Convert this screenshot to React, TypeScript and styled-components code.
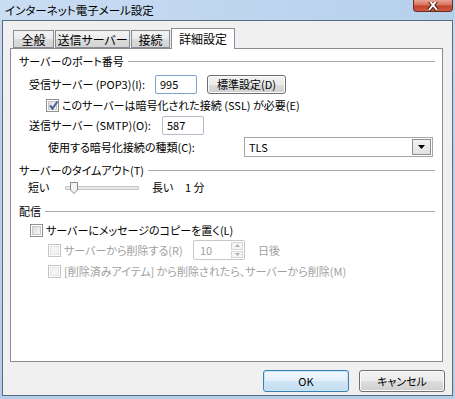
import styled, { createGlobalStyle } from 'styled-components';

const GlobalStyle = createGlobalStyle`
  html, body {
    margin: 0;
    padding: 0;
    background: #c4d8ee;
  }
  body {
    font-family: "Noto Sans CJK JP", "Noto Sans", sans-serif;
    font-size: 11px;
    font-feature-settings: 'palt';
    color: #000;
  }
`;

const Window = styled.div`
  box-sizing: border-box;
  width: 455px;
  height: 399px;
  display: flex;
  flex-direction: column;
  background: linear-gradient(180deg, #c7dbf1 0%, #bad2ec 30%, #b4cde9 100%);
`;

const TitleBar = styled.div`
  height: 20px;
  display: flex;
  align-items: flex-start;
  justify-content: space-between;
  background: linear-gradient(90deg, #c9ddf3 0%, #bfd6ef 50%, #b6d0ec 100%);
`;

const TitleText = styled.div`
  padding: 2px 0 0 5px;
  line-height: 16px;
  font-size: 11.5px;
`;

const CloseButton = styled.div`
  box-sizing: border-box;
  width: 40px;
  height: 12px;
  margin-right: 2px;
  border: 1px solid #6d2a20;
  border-top: none;
  border-radius: 0 0 4px 4px;
  background: linear-gradient(180deg, #e8a493 0%, #d6725c 45%, #c2432b 55%, #cf5b40 100%);
  display: flex;
  justify-content: center;
  align-items: flex-end;
  overflow: hidden;
`;

const Client = styled.div`
  flex: 1;
  margin: 0 2px 3px 2px;
  border: 1px solid #5b6b7c;
  background: #f0f0f0;
  display: flex;
  flex-direction: column;
`;

const TabArea = styled.div`
  margin: 7px 9px 0 7px;
  display: flex;
  flex-direction: column;
`;

const TabStrip = styled.div`
  height: 20px;
  display: flex;
  align-items: flex-end;
  padding-left: 3px;
  position: relative;
  z-index: 1;
`;

const Tab = styled.div<{ $w: number; $active?: boolean }>`
  box-sizing: border-box;
  width: ${(p) => p.$w}px;
  height: ${(p) => (p.$active ? 21 : 18)}px;
  margin-bottom: ${(p) => (p.$active ? -1 : 0)}px;
  margin-right: 1px;
  border: 1px solid #898c95;
  border-bottom: ${(p) => (p.$active ? 'none' : '1px solid #898c95')};
  background: ${(p) =>
    p.$active ? '#fff' : 'linear-gradient(180deg, #f3f3f3 0%, #ebebeb 50%, #dcdcdc 51%, #d4d4d4 100%)'};
  display: flex;
  align-items: center;
  justify-content: center;
  line-height: 16px;
  font-size: 12px;
  padding-top: ${(p) => (p.$active ? 0 : 1)}px;
`;

const Panel = styled.div`
  box-sizing: border-box;
  height: 314px;
  border: 1px solid #898c95;
  background: #fff;
  padding: 4px 7px 0 8px;
  display: flex;
  flex-direction: column;
`;

const GroupHeader = styled.div<{ $mt: number }>`
  height: 16px;
  margin-top: ${(p) => p.$mt}px;
  display: flex;
  align-items: center;
  gap: 4px;
  line-height: 16px;

  &::after {
    content: '';
    flex: 1;
    height: 1px;
    background: #a8a8a8;
    margin-top: 1px;
  }
`;

const Row = styled.div<{ $mt: number; $indent: number; $h?: number }>`
  height: ${(p) => p.$h ?? 20}px;
  margin-top: ${(p) => p.$mt}px;
  padding-left: ${(p) => p.$indent}px;
  display: flex;
  align-items: center;
  line-height: 16px;
  white-space: nowrap;
`;

const Label = styled.span<{ $w?: number; $disabled?: boolean }>`
  display: inline-block;
  flex: none;
  width: ${(p) => (p.$w ? `${p.$w}px` : 'auto')};
  color: ${(p) => (p.$disabled ? '#a0a0a0' : '#000')};
`;

const TextBox = styled.div<{ $w: number; $focus?: boolean }>`
  box-sizing: border-box;
  width: ${(p) => p.$w}px;
  height: 19px;
  border: 1px solid ${(p) => (p.$focus ? '#7da2ce' : '#b5bcc7')};
  border-radius: 2px;
  padding: 0 0 0 4px;
  display: flex;
  align-items: center;
  background: #fff;
`;

const PushButton = styled.div<{ $w: number; $h?: number; $default?: boolean; $ml?: number }>`
  box-sizing: border-box;
  width: ${(p) => p.$w}px;
  height: ${(p) => p.$h ?? 19}px;
  margin-left: ${(p) => p.$ml ?? 0}px;
  border: 1px solid ${(p) => (p.$default ? '#3c7fb1' : '#707070')};
  border-radius: 3px;
  background: ${(p) =>
    p.$default
      ? 'linear-gradient(180deg, #f2f8fc 0%, #e3f0f9 50%, #cfe5f4 51%, #c4dff2 100%)'
      : 'linear-gradient(180deg, #f2f2f2 0%, #ebebeb 50%, #dddddd 51%, #cfcfcf 100%)'};
  box-shadow: inset 0 0 0 1px ${(p) => (p.$default ? '#c5e4f8' : '#fbfbfb')};
  display: flex;
  align-items: center;
  justify-content: center;
  line-height: 16px;
`;

const Box = styled.div<{ $disabled?: boolean }>`
  box-sizing: border-box;
  width: 13px;
  height: 13px;
  border: 1px solid ${(p) => (p.$disabled ? '#c4c4c4' : '#8e8f8f')};
  background: #fff;
  padding: 1px;
  margin-right: 3px;
  flex: none;
`;

const BoxInner = styled.div<{ $disabled?: boolean }>`
  width: 9px;
  height: 9px;
  box-sizing: border-box;
  border: 1px solid ${(p) => (p.$disabled ? '#e4e4e4' : '#c8c8c8')};
  background: ${(p) =>
    p.$disabled ? '#f4f4f4' : 'linear-gradient(135deg, #d9d9d9 0%, #ededed 60%, #f8f8f8 100%)'};
  position: relative;
`;

const Check = styled.svg`
  position: absolute;
  left: -1px;
  top: -2px;
`;

const Combo = styled.div`
  box-sizing: border-box;
  width: 189px;
  height: 20px;
  margin-left: auto;
  margin-right: 2px;
  border: 1px solid #a5a5a5;
  background: #fff;
  display: flex;
  align-items: center;
  padding-left: 4px;
  padding-right: 1px;
`;

const ComboValue = styled.span`
  flex: 1;
`;

const DropButton = styled.div`
  box-sizing: border-box;
  width: 19px;
  height: 16px;
  border: 1px solid #8f8f8f;
  background: linear-gradient(180deg, #f4f4f4 0%, #e2e2e2 100%);
  display: flex;
  align-items: center;
  justify-content: center;
`;

const SliderTrack = styled.div`
  position: relative;
  width: 72px;
  height: 2px;
  margin: 1px 13px 0 13px;
  border: 1px solid #c4c4c4;
  border-radius: 1px;
  background: #e7eaea;
`;

const Thumb = styled.svg`
  position: absolute;
  left: 4px;
  top: -5px;
`;

const Spin = styled.div`
  box-sizing: border-box;
  width: 52px;
  height: 20px;
  border: 1px solid #c4c8ce;
  border-radius: 2px;
  background: #fff;
  display: flex;
  align-items: stretch;
  color: #a0a0a0;
`;

const SpinValue = styled.span`
  flex: 1;
  padding-left: 6px;
  display: flex;
  align-items: center;
`;

const SpinButtons = styled.div`
  width: 14px;
  display: flex;
  flex-direction: column;
  gap: 1px;
  padding: 1px;
  box-sizing: border-box;
`;

const SpinBtn = styled.div`
  flex: 1;
  border: 1px solid #d6d6d6;
  background: #f4f4f4;
  display: flex;
  align-items: center;
  justify-content: center;
`;

const Footer = styled.div`
  margin-top: 8px;
  padding-right: 7px;
  display: flex;
  justify-content: flex-end;
  gap: 10px;
`;

const CheckBox = ({ checked, disabled }: { checked?: boolean; disabled?: boolean }) => (
  <Box $disabled={disabled}>
    <BoxInner $disabled={disabled}>
      {checked && (
        <Check width="11" height="11" viewBox="0 0 11 11">
          <path d="M2 5.5 L4.5 8.5 L9.5 1.5" fill="none" stroke="#4a5f97" strokeWidth="2" />
        </Check>
      )}
    </BoxInner>
  </Box>
);

export default function App() {
  return (
    <>
      <GlobalStyle />
      <Window>
        <TitleBar>
          <TitleText>インターネット電子メール設定</TitleText>
          <CloseButton>
            <svg width="14" height="9" viewBox="0 0 14 9">
              <path d="M3 -2 L11 8 M11 -2 L3 8" stroke="#4a2218" strokeWidth="4" />
              <path d="M3 -2 L11 8 M11 -2 L3 8" stroke="#fff" strokeWidth="2" />
            </svg>
          </CloseButton>
        </TitleBar>
        <Client>
          <TabArea>
            <TabStrip>
              <Tab $w={41}>全般</Tab>
              <Tab $w={75}>送信サーバー</Tab>
              <Tab $w={39}>接続</Tab>
              <Tab $w={64} $active>
                詳細設定
              </Tab>
            </TabStrip>
            <Panel>
              <GroupHeader $mt={0}>サーバーのポート番号</GroupHeader>
              <Row $mt={5} $indent={10}>
                <Label $w={126}>受信サーバー (POP3)(I):</Label>
                <TextBox $w={42} $focus>
                  995
                </TextBox>
                <PushButton $w={79} $ml={10}>
                  標準設定(D)
                </PushButton>
              </Row>
              <Row $mt={1} $indent={27}>
                <CheckBox checked />
                <Label>このサーバーは暗号化された接続 (SSL) が必要(E)</Label>
              </Row>
              <Row $mt={0} $indent={10}>
                <Label $w={133}>送信サーバー (SMTP)(O):</Label>
                <TextBox $w={42}>587</TextBox>
              </Row>
              <Row $mt={2} $indent={29}>
                <Label>使用する暗号化接続の種類(C):</Label>
                <Combo>
                  <ComboValue>TLS</ComboValue>
                  <DropButton>
                    <svg width="7" height="4" viewBox="0 0 7 4">
                      <path d="M0 0 H7 L3.5 4 Z" fill="#000" />
                    </svg>
                  </DropButton>
                </Combo>
              </Row>
              <GroupHeader $mt={5}>サーバーのタイムアウト(T)</GroupHeader>
              <Row $mt={0} $indent={9} $h={18}>
                <Label $w={24}>短い</Label>
                <SliderTrack>
                  <Thumb width="8" height="12" viewBox="0 0 8 12">
                    <path
                      d="M0.5 0.5 H7.5 V8 L4 11.5 L0.5 8 Z"
                      fill="#f3f3f3"
                      stroke="#8a8a8a"
                      strokeWidth="1"
                    />
                  </Thumb>
                </SliderTrack>
                <Label $w={33}>長い</Label>
                <Label>1 分</Label>
              </Row>
              <GroupHeader $mt={7}>配信</GroupHeader>
              <Row $mt={2} $indent={11} $h={18}>
                <CheckBox />
                <Label>サーバーにメッセージのコピーを置く(L)</Label>
              </Row>
              <Row $mt={1} $indent={29}>
                <CheckBox disabled />
                <Label $disabled $w={129}>
                  サーバーから削除する(R)
                </Label>
                <Spin>
                  <SpinValue>10</SpinValue>
                  <SpinButtons>
                    <SpinBtn>
                      <svg width="5" height="3" viewBox="0 0 5 3">
                        <path d="M0 3 H5 L2.5 0 Z" fill="#b0b0b0" />
                      </svg>
                    </SpinBtn>
                    <SpinBtn>
                      <svg width="5" height="3" viewBox="0 0 5 3">
                        <path d="M0 0 H5 L2.5 3 Z" fill="#b0b0b0" />
                      </svg>
                    </SpinBtn>
                  </SpinButtons>
                </Spin>
                <Label $disabled style={{ marginLeft: 13 }}>
                  日後
                </Label>
              </Row>
              <Row $mt={2} $indent={29} $h={18}>
                <CheckBox disabled />
                <Label $disabled>[削除済みアイテム] から削除されたら、サーバーから削除(M)</Label>
              </Row>
            </Panel>
          </TabArea>
          <Footer>
            <PushButton $w={86} $h={22} $default>
              OK
            </PushButton>
            <PushButton $w={86} $h={22}>
              キャンセル
            </PushButton>
          </Footer>
        </Client>
      </Window>
    </>
  );
}
